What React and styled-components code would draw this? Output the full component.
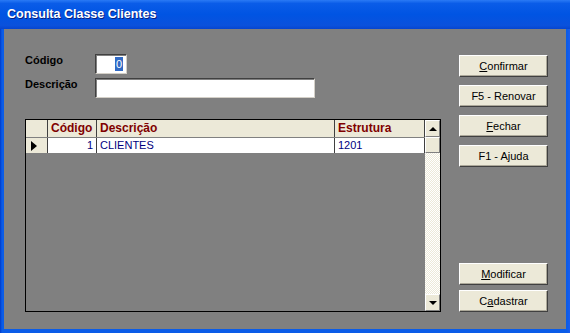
import React from 'react';
import styled, { createGlobalStyle } from 'styled-components';

const GlobalStyle = createGlobalStyle`
    html, body {
        margin: 0;
        padding: 0;
        background: #808080;
    }
    body {
        font-family: "Liberation Sans", Arial, sans-serif;
    }
`;

const rows = [{ codigo: 1, descricao: 'CLIENTES', estrutura: '1201' }];

const App = () => (
    <>
        <GlobalStyle />
        <Window>
            <TitleBar>Consulta Classe Clientes</TitleBar>
            <Frame>
                <Body>
                    <LeftCol>
                        <FormRow>
                            <Label>Código</Label>
                            <Input width={32} align="right">
                                <Selected>0</Selected>
                            </Input>
                        </FormRow>
                        <FormRow>
                            <Label>Descrição</Label>
                            <Input width={220} />
                        </FormRow>
                        <Grid>
                            <GridMain>
                                <HeadRow>
                                    <Indicator />
                                    <HeadCell width={49}>Código</HeadCell>
                                    <HeadCell width={238}>Descrição</HeadCell>
                                    <HeadCell width={90}>Estrutura</HeadCell>
                                </HeadRow>
                                {rows.map((r) => (
                                    <DataRow key={r.codigo}>
                                        <Indicator>
                                            <Arrow />
                                        </Indicator>
                                        <Cell width={49} align="right">{r.codigo}</Cell>
                                        <Cell width={238}>{r.descricao}</Cell>
                                        <Cell width={90}>{r.estrutura}</Cell>
                                    </DataRow>
                                ))}
                            </GridMain>
                            <ScrollBar>
                                <ScrollBtn>
                                    <Tri up />
                                </ScrollBtn>
                                <Thumb />
                                <Track />
                                <ScrollBtn>
                                    <Tri />
                                </ScrollBtn>
                            </ScrollBar>
                        </Grid>
                    </LeftCol>
                    <RightCol>
                        <ButtonGroup gap={8}>
                            <Button><u>C</u>onfirmar</Button>
                            <Button>F5 - Renovar</Button>
                            <Button><u>F</u>echar</Button>
                            <Button>F1 - Ajuda</Button>
                        </ButtonGroup>
                        <ButtonGroup gap={5} bottom>
                            <Button><u>M</u>odificar</Button>
                            <Button>C<u>a</u>dastrar</Button>
                        </ButtonGroup>
                    </RightCol>
                </Body>
            </Frame>
        </Window>
    </>
);

/*
    Window
*/
const Window = styled.div`
    width: 570px;
    height: 333px;
    display: flex;
    flex-direction: column;
    background: #0a4fe0;
`;

const TitleBar = styled.div`
    height: 29px;
    flex-shrink: 0;
    display: flex;
    align-items: center;
    padding: 0 0 1px 7px;
    box-sizing: border-box;
    background: linear-gradient(#2a7af5 0%, #0a5ce8 12%, #0054e3 50%, #0a51dc 88%, #0645cf 100%);
    color: #fff;
    font-weight: bold;
    font-size: 12.5px;
    text-shadow: 1px 1px 0 #0a1f80;
`;

const Frame = styled.div`
    flex: 1;
    display: flex;
    padding: 0 4px 4px 4px;
    background: linear-gradient(90deg, #0038c8, #0a5ce8 2px, #0a5ce8 calc(100% - 3px), #1a5cf0);
`;

const Body = styled.div`
    flex: 1;
    display: flex;
    background: #808080;
    padding: 25px 0 17px 21px;
`;

const LeftCol = styled.div`
    width: 416px;
    display: flex;
    flex-direction: column;
`;

const FormRow = styled.div`
    display: flex;
    align-items: center;
    height: 20px;
    margin-bottom: 4px;
`;

const Label = styled.div`
    width: 70px;
    font-size: 11px;
    font-weight: bold;
    color: #000;
    position: relative;
    top: -4px;
`;

const Input = styled.div`
    width: ${(p) => p.width}px;
    height: 20px;
    box-sizing: border-box;
    background: #fff;
    border-top: 1px solid #404040;
    border-left: 1px solid #404040;
    border-right: 1px solid #d4d0c8;
    border-bottom: 1px solid #d4d0c8;
    box-shadow: inset 1px 1px 0 #808080;
    display: flex;
    align-items: center;
    justify-content: ${(p) => (p.align === 'right' ? 'flex-end' : 'flex-start')};
    padding: 0 3px;
    font-size: 11px;
`;

const Selected = styled.span`
    background: #316ac5;
    color: #fff;
    padding: 0 1px;
    line-height: 14px;
`;

/*
    Grid
*/
const Grid = styled.div`
    margin-top: 17px;
    flex: 1;
    display: flex;
    border: 1px solid #000;
    background: #808080;
`;

const GridMain = styled.div`
    flex: 1;
    display: flex;
    flex-direction: column;
`;

const HeadRow = styled.div`
    display: flex;
    height: 17px;
    background: #ece9d8;
    border-bottom: 1px solid #808080;
`;

const DataRow = styled.div`
    display: flex;
    height: 15px;
    background: #fff;
    border-bottom: 1px solid #808080;
`;

const Indicator = styled.div`
    width: 21px;
    background: #ece9d8;
    border-right: 1px solid #404040;
    display: flex;
    align-items: center;
    justify-content: center;
    box-sizing: content-box;
`;

const Arrow = styled.div`
    width: 0;
    height: 0;
    border-top: 5px solid transparent;
    border-bottom: 5px solid transparent;
    border-left: 6px solid #000;
    margin-left: -6px;
`;

const HeadCell = styled.div`
    width: ${(p) => p.width}px;
    border-right: 1px solid #404040;
    color: #800000;
    font-weight: bold;
    font-size: 12px;
    line-height: 17px;
    padding: 0 3px;
    box-sizing: border-box;
    white-space: nowrap;
`;

const Cell = styled.div`
    width: ${(p) => p.width}px;
    border-right: 1px solid #404040;
    color: #000080;
    font-size: 11px;
    line-height: 15px;
    padding: 0 3px;
    box-sizing: border-box;
    text-align: ${(p) => p.align || 'left'};
    white-space: nowrap;
`;

const ScrollBar = styled.div`
    width: 15px;
    display: flex;
    flex-direction: column;
    background: repeating-conic-gradient(#fff 0 25%, #ece9d8 0 50%) 0 0 / 2px 2px;
`;

const ScrollBtn = styled.div`
    height: 17px;
    background: #ece9d8;
    box-sizing: border-box;
    border-top: 1px solid #fff;
    border-left: 1px solid #fff;
    border-right: 1px solid #808080;
    border-bottom: 1px solid #808080;
    display: flex;
    align-items: center;
    justify-content: center;
`;

const Thumb = styled(ScrollBtn)`
    height: 16px;
`;

const Track = styled.div`
    flex: 1;
`;

const Tri = styled.div`
    width: 0;
    height: 0;
    border-left: 4px solid transparent;
    border-right: 4px solid transparent;
    ${(p) => (p.up ? 'border-bottom: 4px solid #000;' : 'border-top: 4px solid #000;')}
`;

/*
    Buttons
*/
const RightCol = styled.div`
    margin-left: 18px;
    width: 89px;
    display: flex;
    flex-direction: column;
    padding-top: 1px;
`;

const ButtonGroup = styled.div`
    display: flex;
    flex-direction: column;
    gap: ${(p) => p.gap}px;
    margin-top: ${(p) => (p.bottom ? 'auto' : '0')};
`;

const Button = styled.div`
    height: 22px;
    box-sizing: border-box;
    background: #ece9d8;
    border-top: 1px solid #fff;
    border-left: 1px solid #fff;
    border-right: 1px solid #404040;
    border-bottom: 1px solid #404040;
    box-shadow: inset -1px -1px 0 #aca899;
    display: flex;
    align-items: center;
    justify-content: center;
    font-size: 11px;
    color: #000;

    u {
        text-decoration: underline;
    }
`;

export default App;
